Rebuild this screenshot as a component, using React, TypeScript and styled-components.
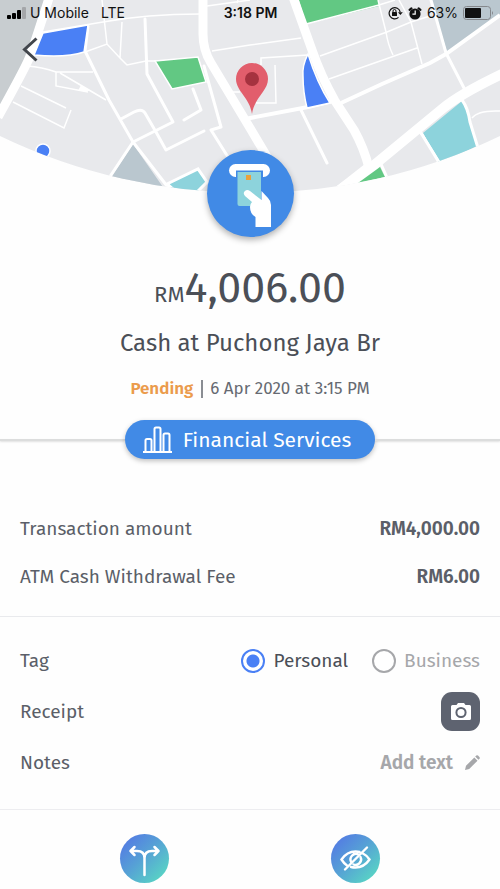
import React, { useState } from "react";
import styled, { createGlobalStyle } from "styled-components";

const GlobalStyle = createGlobalStyle`
  *, *::before, *::after { box-sizing: border-box; }
  body {
    margin: 0;
    background: #fefefe;
    color: #5b5f68;
    font-family: "Fira Sans", "Noto Sans", sans-serif;
    font-size: 19px;
    line-height: 24px;
  }
  button, input { font: inherit; }
`;

const Page = styled.main`
  display: flex;
  flex-direction: column;
`;

const Hero = styled.header`
  position: relative;
  display: flex;
  flex-direction: column;
  margin-bottom: 23px;
`;

const MapArt = styled.svg`
  position: absolute;
  top: 0;
  left: 0;
  width: 100%;
  height: 196px;
`;

const StatusBar = styled.div`
  position: relative;
  display: grid;
  grid-template-columns: 1fr auto 1fr;
  align-items: center;
  height: 26px;
  padding: 0 6px 0 7px;
  color: #111;
  font-family: Inter, sans-serif;
  font-size: 14px;
  line-height: 16px;
`;

const StatusGroup = styled.div<{ $end?: boolean }>`
  display: flex;
  align-items: center;
  justify-content: ${(p) => (p.$end ? "flex-end" : "flex-start")};
  gap: ${(p) => (p.$end ? "5px" : "4px")};
`;

const Network = styled.span`
  margin-left: 8px;
`;

const Clock = styled.time`
  font-weight: 600;
`;

const BackButton = styled.button`
  position: relative;
  display: flex;
  align-self: flex-start;
  margin: 8px 0 0 16px;
  padding: 0;
  border: 0;
  background: none;
  cursor: pointer;
`;

const CategoryBadge = styled.div`
  position: relative;
  align-self: center;
  width: 87px;
  height: 87px;
  margin-top: 84px;
  border-radius: 50%;
  background: #418ae6;
  box-shadow: 0 3px 6px rgba(0, 0, 0, 0.3);
  svg { display: block; }
`;

const Summary = styled.section`
  display: flex;
  flex-direction: column;
  align-items: center;
  color: #4b4f57;
  text-align: center;
`;

const Amount = styled.p`
  margin: 0;
  font-size: 43px;
  line-height: 56px;
`;

const Currency = styled.span`
  font-size: 22px;
`;

const Merchant = styled.h1`
  margin: 2px 0 0;
  font-size: 24px;
  font-weight: 400;
  line-height: 36px;
`;

const Meta = styled.p`
  display: flex;
  align-items: center;
  gap: 7px;
  margin: 16px 0 0;
  color: #666a72;
  font-size: 17px;
  line-height: 24px;
`;

const Status = styled.strong`
  padding-right: 8px;
  border-right: 2px solid #8a8d93;
  color: #eb9b4c;
  font-weight: 600;
  line-height: 18px;
`;

const CategoryLine = styled.div`
  display: flex;
  align-items: center;
  margin-top: 19px;
  &::before, &::after {
    content: "";
    flex: 1;
    height: 2px;
    background: #dcdddd;
    box-shadow: 0 1px 2px rgba(0, 0, 0, 0.12);
  }
`;

const CategoryButton = styled.button`
  display: flex;
  align-items: center;
  gap: 11px;
  height: 39px;
  padding: 0 24px 0 18px;
  border: 0;
  border-radius: 20px;
  background: #418ae6;
  color: #fff;
  font-size: 21px;
  box-shadow: 0 2px 5px rgba(0, 0, 0, 0.25);
  cursor: pointer;
`;

const Breakdown = styled.dl`
  display: flex;
  flex-direction: column;
  gap: 24px;
  margin: 0;
  padding: 58px 20px 27px;
  border-bottom: 1px solid #e9eaed;
`;

const BreakdownRow = styled.div`
  display: flex;
  justify-content: space-between;
  dd { margin: 0; font-weight: 600; }
`;

const Details = styled.section`
  display: flex;
  flex-direction: column;
  padding: 18px 20px 21px;
  border-bottom: 1px solid #ededf0;
`;

const DetailRow = styled.div`
  display: flex;
  align-items: center;
  justify-content: space-between;
  height: 51px;
`;

const TagOptions = styled.div`
  display: flex;
  gap: 24px;
`;

const TagOption = styled.label<{ $selected: boolean }>`
  display: flex;
  align-items: center;
  gap: 8px;
  color: ${(p) => (p.$selected ? "#4b4f57" : "#a6a7aa")};
  cursor: pointer;
`;

const Radio = styled.input`
  appearance: none;
  width: 24px;
  height: 24px;
  margin: 0;
  border: 2px solid #a6a7aa;
  border-radius: 50%;
  background: #fff;
  &:checked {
    border-color: #4a80f5;
    background: radial-gradient(circle, #4a80f5 6px, #fff 7px);
  }
`;

const CameraButton = styled.button`
  display: flex;
  align-items: center;
  justify-content: center;
  width: 39px;
  height: 39px;
  padding: 0;
  border: 0;
  border-radius: 11px;
  background: #5e6370;
  color: #fff;
  cursor: pointer;
`;

const NoteButton = styled.button`
  display: flex;
  align-items: center;
  gap: 12px;
  padding: 0;
  border: 0;
  background: none;
  color: #a6a7aa;
  font-weight: 600;
  cursor: pointer;
`;

const Actions = styled.nav`
  display: flex;
  justify-content: space-between;
  padding: 24px 24% 6px;
`;

const ActionButton = styled.button`
  display: flex;
  width: 49px;
  height: 49px;
  padding: 0;
  border: 0;
  border-radius: 50%;
  background: linear-gradient(135deg, #5379e4 8%, #569fd6 45%, #59dcc2 95%);
  cursor: pointer;
`;

const StreetMap = () => (
  <MapArt viewBox="0 0 500 196" preserveAspectRatio="xMidYMin slice" aria-hidden="true">
    <defs>
      <clipPath id="dome">
        <path d="M0 0H500V136A577 577 0 0 1 0 136Z" />
      </clipPath>
    </defs>
    <g clipPath="url(#dome)">
      <path fill="#e8e9ec" d="M0 0H500V196H0Z" />
      <path fill="#c8cdd0" d="M0 0H45L24 64 0 106Z" />
      <path fill="#bac7cf" d="M431 0H500V16L447 52ZM133 144L111 178 165 190Z" />
      <path fill="#62c883" d="M299 0H378L379 6 306 24Z" />
      <path fill="#8dd3dc" d="M423 133L462 101Q468 108 470 122L477 146 439 164Z" />
      <g fill="none" stroke="#fff" strokeWidth="1.5">
        <path d="M43 32L103 22Q147 14 200 14M207 6L250 0M102 0L107 44M122 22L120 58M85 52L107 44 120 58 127 65 146 61 156 61" />
        <path d="M27 66Q42 67 56 72H93M56 72V86L88 92M60 73L106 100M21 86L66 108M13 102L64 128 71 110" />
        <path d="M212 51L250 45 301 38M238 0L237 3M233 92H240M261 65V58L308 55M275 65L276 103H256" />
        <path d="M306 24L379 5 395 0M320 56L387 32 411 22 430 16M329 79L417 48M378 0L386 32Q388 45 393 55M399 0L411 22 422 64M472 118Q478 110 500 111" />
      </g>
      <path fill="#fff" d="M81 85L91 91 78 91Z" />
      <g fill="none" stroke="#fff" strokeWidth="3" strokeLinecap="round" strokeLinejoin="round">
        <path d="M88 26L85 51 109 100 133 142 167 186M133 142L109 178M145 19L147 74 173 122 133 142M121 119L134 112Q142 108 145 113L156 132 166 150 204 131" />
        <path d="M193 89L201 110 184 120M204 66L221 127 211 130 228 157M301 110L327 163M421 133L440 164M381 164L388 180M462 100Q468 108 470 122L478 148M431 0L446 53 465 90" />
      </g>
      <path fill="none" stroke="#fff" strokeWidth="4" d="M341 103L382 84 430 63 446 54 500 15M245 119L308 107 333 101" />
      <g fill="none" stroke="#fff" strokeWidth="9">
        <path d="M49 -2Q38 33 30 56 27 65 -2 117M203 0V34Q203 50 211 63L250 128 291 197M293 -3L312 50Q321 76 335 101L354 130Q364 148 369 168" />
        <path strokeWidth="10" d="M334 194L368 170 442 109Q460 94 502 74" />
      </g>
      <path fill="#fff" d="M333 189L370 160 386 176 384 184 340 194Z" />
      <g stroke="#fff" strokeWidth="1.5">
        <path fill="#4a80f5" d="M43 33L88 25 84 52Q66 58 34 55Z" />
        <path fill="#62c883" d="M155 61L198 57 206 82 172 89Z" />
        <path fill="#4a80f5" d="M308 54Q302 66 303 76 303 92 307 108L330 103Q317 83 308 54Z" />
        <circle fill="#4a80f5" cx="43" cy="151" r="7" />
      </g>
      <path fill="#8dd3dc" stroke="#fff" strokeWidth="3" d="M167 184L198 169 207 182 197 192 174 190Z" />
      <path fill="#e8e9ec" d="M384 165L422 134 438 160 389 175Z" />
      <path fill="none" stroke="#fff" strokeWidth="3" d="M421 133L440 164" />
      <path fill="#62c883" d="M358 183L380 167 385 177Z" />
    </g>
    <path fill="#e25e6c" d="M252 114C250 98 236 91 236 79A16 16 0 0 1 268 79C268 91 254 98 252 114Z" />
    <circle fill="#a5323f" cx="252" cy="79" r="7" />
  </MapArt>
);

const SignalIcon = () => (
  <svg width="19" height="12" viewBox="0 0 19 12" role="img" aria-label="Signal">
    <rect x="0" y="8" width="4" height="4" rx="1" />
    <rect x="5" y="6" width="4" height="6" rx="1" />
    <rect x="10" y="3" width="4" height="9" rx="1" />
    <rect x="15" y="0" width="4" height="12" rx="1" fill="#a4a6a9" />
  </svg>
);

const RotationLockIcon = () => (
  <svg width="15" height="14" viewBox="0 0 15 14" fill="none" stroke="#111" role="img" aria-label="Rotation lock">
    <path strokeWidth="1.2" d="M10.5 11.4A5.6 5.6 0 1 1 12.2 6" />
    <path fill="#111" stroke="none" d="M10 6.2H14.8L12.4 9Z" />
    <rect x="4" y="6" width="5" height="4" rx="0.6" fill="#111" stroke="none" />
    <path strokeWidth="1" d="M5 6V5A1.5 1.5 0 0 1 8 5V6" />
  </svg>
);

const AlarmIcon = () => (
  <svg width="14" height="13" viewBox="0 0 14 13" fill="none" role="img" aria-label="Alarm">
    <circle cx="7" cy="7" r="5.6" fill="#111" />
    <path stroke="#111" strokeWidth="2.2" strokeLinecap="round" d="M1.6 2.8L3.4 1.4M12.4 2.8L10.6 1.4" />
    <path stroke="#fff" strokeWidth="1.2" d="M7.2 3.6V7.2H4.4" />
  </svg>
);

const BatteryIcon = () => (
  <svg width="31" height="14" viewBox="0 0 31 14" role="img" aria-label="Battery">
    <rect x="0.5" y="0.5" width="27" height="13" rx="3" fill="none" stroke="#85888c" />
    <rect x="2" y="2" width="16" height="10" rx="1" fill="#111" />
    <path d="M29 5Q31 7 29 9Z" fill="#85888c" />
  </svg>
);

const AtmIcon = () => (
  <svg width="87" height="87" viewBox="0 0 87 87" aria-hidden="true">
    <rect x="22" y="14" width="41" height="13" rx="6.5" fill="#fff" />
    <rect x="29" y="20.5" width="27" height="7" fill="#418ae6" />
    <path fill="#8dd3dc" d="M31 22H54V56H32.5Q30.5 56 30.5 54V22Z" />
    <rect x="39" y="25" width="5" height="5" fill="#eaa13d" />
    <path fill="#fff" d="M54.5 41L61 48Q64 51 64 55V77H48.5V67Q43 64 43 57Q43 54 45 52L38 46Q35.5 43 38 41Q40 39 43 41L54.5 50Z" />
  </svg>
);

const ChartIcon = () => (
  <svg width="29" height="28" viewBox="0 0 29 28" fill="none" stroke="#fff" strokeWidth="2" aria-hidden="true">
    <path d="M0 26H29M2.5 26V14.5Q2.5 13 4 13H7Q8.5 13 8.5 14.5V26M11.5 26V3Q11.5 1.5 13 1.5H16Q17.5 1.5 17.5 3V26M20.5 26V9Q20.5 7.5 22 7.5H25Q26.5 7.5 26.5 9V26" />
  </svg>
);

const CameraIcon = () => (
  <svg width="20" height="17" viewBox="0 0 20 17" aria-hidden="true">
    <path fill="#fff" d="M1.5 2H5.5L7 0H13L14.5 2H18.5Q20 2 20 3.500V15.500Q20 17 18.500 17H1.500Q0 17 0 15.500V3.500Q0 2 1.500 2Z" />
    <circle cx="10" cy="9.5" r="4.600" fill="none" stroke="#5e6370" strokeWidth="2" />
  </svg>
);

const PencilIcon = () => (
  <svg width="15" height="15" viewBox="0 0 15 15" fill="currentColor" aria-hidden="true">
    <path d="M0 15L1 10.8 9.3 2.5 12.5 5.7 4.200 14ZM10.200 1.600L11.300 0.500Q12.200 -0.200 13 0.600L14.400 2Q15.200 2.800 14.500 3.700L13.400 4.800Z" />
  </svg>
);

const SplitIcon = () => (
  <svg width="49" height="49" viewBox="0 0 49 49" fill="none" stroke="#fff" strokeWidth="2.5" strokeLinecap="round" strokeLinejoin="round" aria-hidden="true">
    <path d="M24.5 41V24Q24.5 17 17 17H10.5M24.5 24Q24.5 17 32 17H38.5M14.5 13L10.5 17 14.5 21M34.5 13L38.5 17 34.5 21" />
  </svg>
);

const HideIcon = () => (
  <svg width="49" height="49" viewBox="0 0 49 49" fill="none" stroke="#fff" strokeWidth="2.4" strokeLinecap="round" aria-hidden="true">
    <path d="M32 19.5Q36 21.5 38.5 25.5 33 33.5 24.5 33.5 22 33.5 20 33M16 31.5Q13 29.5 10.5 25.5 16 17.5 24.5 17.5 27 17.5 28.5 18M36 13.5L14 35.5" />
    <path d="M20.5 28.5A5.5 5.5 0 0 1 27.5 20.5M29.5 23A5.5 5.5 0 0 1 22.5 30.5" />
  </svg>
);

const charges = [
  { label: "Transaction amount", value: "RM4,000.00" },
  { label: "ATM Cash Withdrawal Fee", value: "RM6.00" },
];

const tags = ["Personal", "Business"];

export default function App() {
  const [tag, setTag] = useState("Personal");

  return (
    <Page>
      <GlobalStyle />
      <Hero>
        <StreetMap />
        <StatusBar>
          <StatusGroup>
            <SignalIcon />
            <span>U Mobile</span>
            <Network>LTE</Network>
          </StatusGroup>
          <Clock>3:18 PM</Clock>
          <StatusGroup $end>
            <RotationLockIcon />
            <AlarmIcon />
            <span>63%</span>
            <BatteryIcon />
          </StatusGroup>
        </StatusBar>
        <BackButton type="button" aria-label="Back">
          <svg width="32" height="32" viewBox="0 0 32 32" fill="none" stroke="#42464c" strokeWidth="3">
            <path d="M20.5 4.5L8.5 15.5 20.5 26.5" />
          </svg>
        </BackButton>
        <CategoryBadge>
          <AtmIcon />
        </CategoryBadge>
      </Hero>

      <Summary>
        <Amount>
          <Currency>RM</Currency>4,006.00
        </Amount>
        <Merchant>Cash at Puchong Jaya Br</Merchant>
        <Meta>
          <Status>Pending</Status>
          <time dateTime="2020-04-06T15:15">6 Apr 2020 at 3:15 PM</time>
        </Meta>
      </Summary>

      <CategoryLine>
        <CategoryButton type="button">
          <ChartIcon />
          Financial Services
        </CategoryButton>
      </CategoryLine>

      <Breakdown>
        {charges.map((c) => (
          <BreakdownRow key={c.label}>
            <dt>{c.label}</dt>
            <dd>{c.value}</dd>
          </BreakdownRow>
        ))}
      </Breakdown>

      <Details>
        <DetailRow>
          <span id="tag-label">Tag</span>
          <TagOptions role="radiogroup" aria-labelledby="tag-label">
            {tags.map((name) => (
              <TagOption key={name} $selected={tag === name}>
                <Radio type="radio" name="tag" value={name} checked={tag === name} onChange={() => setTag(name)} />
                {name}
              </TagOption>
            ))}
          </TagOptions>
        </DetailRow>
        <DetailRow>
          <span>Receipt</span>
          <CameraButton type="button" aria-label="Add receipt photo">
            <CameraIcon />
          </CameraButton>
        </DetailRow>
        <DetailRow>
          <span>Notes</span>
          <NoteButton type="button">
            Add text
            <PencilIcon />
          </NoteButton>
        </DetailRow>
      </Details>

      <Actions aria-label="Transaction actions">
        <ActionButton type="button" aria-label="Split transaction">
          <SplitIcon />
        </ActionButton>
        <ActionButton type="button" aria-label="Hide transaction">
          <HideIcon />
        </ActionButton>
      </Actions>
    </Page>
  );
}
